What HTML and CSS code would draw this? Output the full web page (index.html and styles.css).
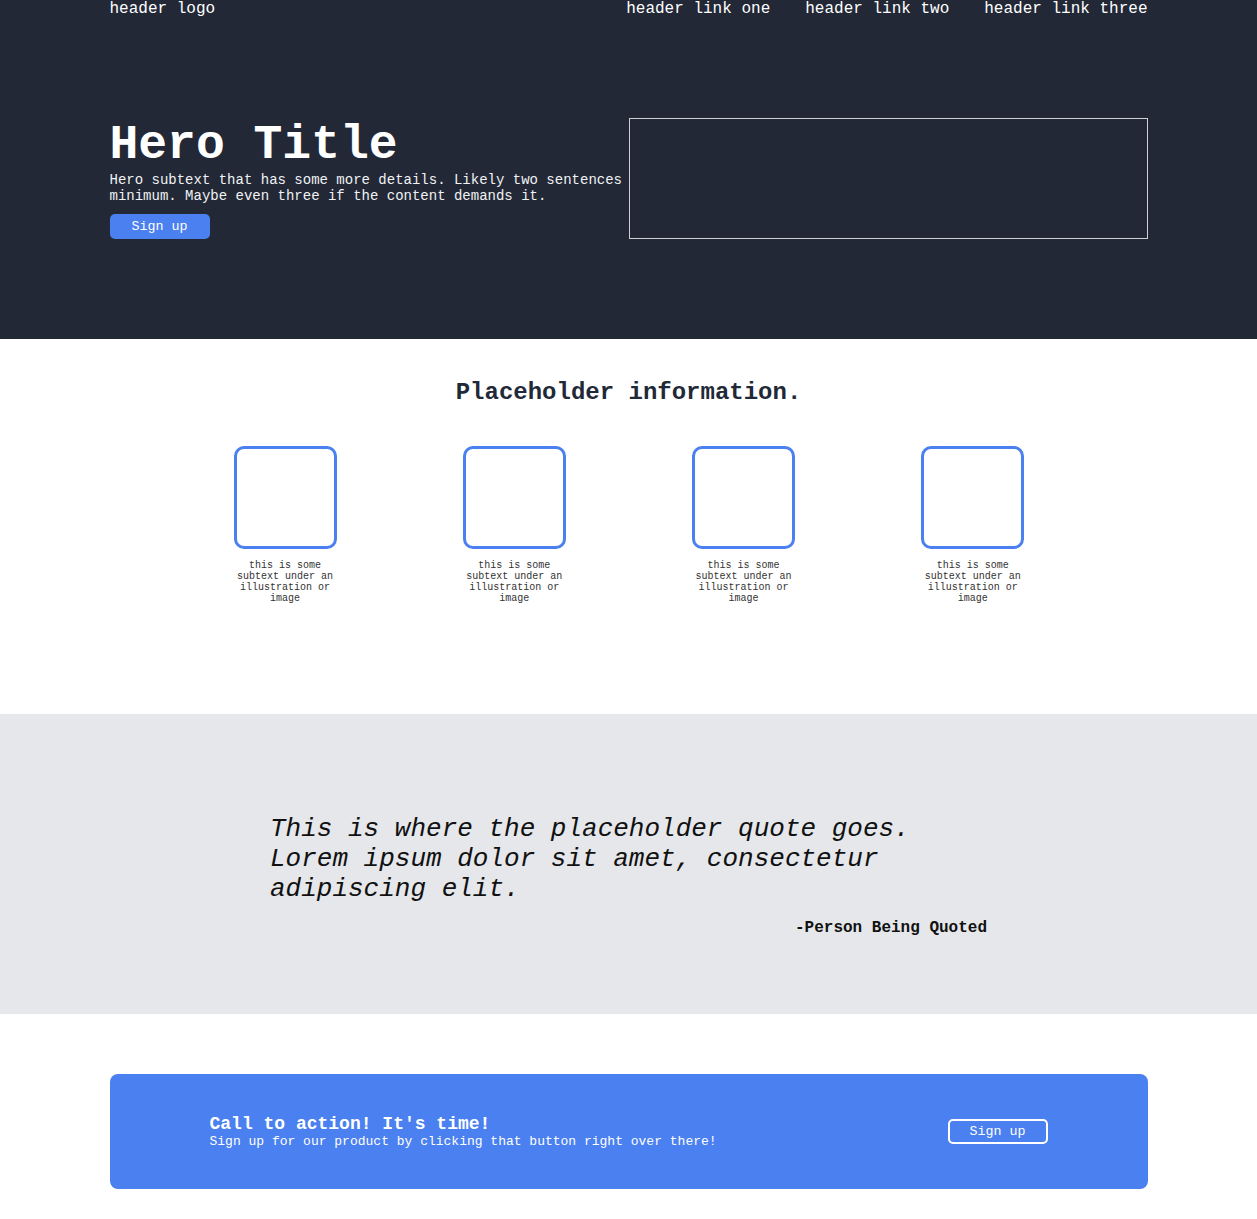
FILE: index.html
```html
<!DOCTYPE html>
<html lang="en">
<head>
<meta charset="utf-8">
<title>Landing</title>
<link rel="stylesheet" href="styles.css">
</head>
<body>
<div class="dark">
  <header class="container header">
    <div class="logo">header logo</div>
    <nav class="links">
      <a href="#">header link one</a>
      <a href="#">header link two</a>
      <a href="#">header link three</a>
    </nav>
  </header>
  <section class="container hero">
    <div class="hero-text">
      <h1 class="hero-title">Hero Title</h1>
      <p class="hero-sub">Hero subtext that has some more details. Likely two sentences minimum. Maybe even three if the content demands it.</p>
      <button class="btn-primary">Sign up</button>
    </div>
    <div class="hero-image"></div>
  </section>
</div>

<section class="info">
  <h2 class="info-title">Placeholder information.</h2>
  <div class="cards">
    <div class="card"><div class="card-img"></div><p class="card-text">this is some subtext under an illustration or image</p></div>
    <div class="card"><div class="card-img"></div><p class="card-text">this is some subtext under an illustration or image</p></div>
    <div class="card"><div class="card-img"></div><p class="card-text">this is some subtext under an illustration or image</p></div>
    <div class="card"><div class="card-img"></div><p class="card-text">this is some subtext under an illustration or image</p></div>
  </div>
</section>

<section class="quote-section">
  <div class="quote-wrap">
    <p class="quote">This is where the placeholder quote goes. Lorem ipsum dolor sit amet, consectetur adipiscing elit.</p>
    <p class="author">-Person Being Quoted</p>
  </div>
</section>

<section class="container cta">
  <div class="cta-text">
    <div class="cta-title">Call to action! It's time!</div>
    <div class="cta-sub">Sign up for our product by clicking that button right over there!</div>
  </div>
  <button class="btn-outline">Sign up</button>
</section>
</body>
</html>
```

FILE: styles.css
```css
* { box-sizing: border-box; }
html, body { margin: 0; padding: 0; }
body {
  font-family: "Liberation Mono", "DejaVu Sans Mono", monospace;
  background: #ffffff;
  color: #1f2937;
}
.container {
  width: 1038px;
  margin-left: auto;
  margin-right: auto;
}
.dark {
  background: #222836;
  color: #ffffff;
}
.header {
  display: flex;
  justify-content: space-between;
  font-size: 16px;
  line-height: normal;
}
.links {
  display: flex;
  gap: 35px;
}
.links a {
  color: #ffffff;
  text-decoration: none;
}
.hero {
  display: flex;
  padding: 100px 0;
}
.hero-text {
  width: 519px;
}
.hero-title {
  margin: 0;
  font-size: 48px;
  font-weight: 700;
  line-height: normal;
}
.hero-sub {
  margin: 0;
  font-size: 14px;
  line-height: 16px;
  color: #f1f2f4;
}
.btn-primary {
  margin-top: 10px;
  width: 100px;
  height: 25px;
  border: none;
  border-radius: 5px;
  background: #4a80ef;
  color: #ffffff;
  font-family: "Liberation Mono", monospace;
  font-size: 13.33px;
  padding: 0;
}
.hero-image {
  width: 519px;
  height: 121px;
  border: 1px solid #cfd0d2;
}
.info {
  padding: 40px 0 110px;
  text-align: center;
}
.info-title {
  margin: 0;
  font-size: 24px;
  font-weight: 700;
  line-height: normal;
  color: #1f2937;
}
.cards {
  margin: 40px auto 0;
  width: 918px;
  padding-left: 1px;
  display: grid;
  grid-template-columns: repeat(4, 1fr);
  justify-items: center;
}
.card {
  width: 103px;
}
.card-img {
  width: 103px;
  height: 103px;
  border: 3px solid #4a80ef;
  border-radius: 10px;
}
.card-text {
  margin: 11px 0 0;
  font-size: 10px;
  line-height: normal;
  color: #333333;
}
.quote-section {
  background: #e5e7eb;
  padding: 100px 0 77px;
}
.quote-wrap {
  width: 717px;
  margin: 0 auto;
}
.quote {
  margin: 0;
  font-size: 26px;
  line-height: 30px;
  font-style: italic;
  color: #111111;
}
.author {
  margin: 15px 0 0;
  text-align: right;
  font-size: 16px;
  font-weight: 700;
  line-height: normal;
  color: #111111;
}
.cta {
  margin-top: 60px;
  margin-bottom: 30px;
  height: 115px;
  background: #4a80ef;
  border-radius: 8px;
  display: flex;
  align-items: center;
  justify-content: space-between;
  padding: 0 100px;
  color: #ffffff;
}
.cta-title {
  font-size: 18px;
  font-weight: 700;
  line-height: normal;
}
.cta-sub {
  font-size: 13px;
  line-height: normal;
}
.btn-outline {
  width: 100px;
  height: 25px;
  border: 2px solid #ffffff;
  border-radius: 5px;
  background: transparent;
  color: #ffffff;
  font-family: "Liberation Mono", monospace;
  font-size: 13.33px;
  padding: 0;
}
```
